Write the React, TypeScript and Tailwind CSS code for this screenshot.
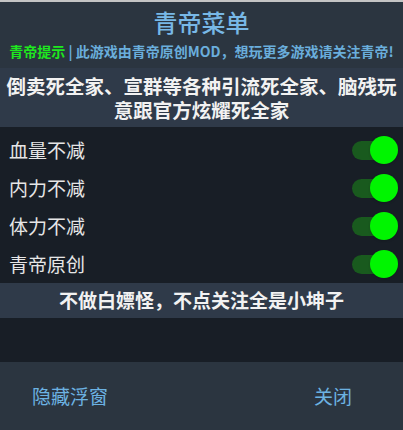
import { useState } from 'react'

const font = { fontFamily: '"Noto Sans CJK SC", "Noto Sans", sans-serif' }

const items = ['血量不减', '内力不减', '体力不减', '青帝原创']

function Toggle({ on, onClick }: { on: boolean; onClick: () => void }) {
  return (
    <button type="button" onClick={onClick} className="relative h-[30px] w-[48px]">
      <span
        className={`absolute left-[1px] top-[6px] h-[19px] w-[40px] rounded-full ${
          on ? 'bg-[#195a1e]' : 'bg-[#3a3f46]'
        }`}
      />
      <span
        className={`absolute top-[1px] h-[28px] w-[28px] rounded-full shadow ${
          on ? 'left-[19px] bg-[#00f500]' : 'left-0 bg-[#bbbbbb]'
        }`}
      />
    </button>
  )
}

export default function App() {
  const [state, setState] = useState<boolean[]>([true, true, true, true])

  return (
    <div className="flex h-[430px] w-[403px] flex-col bg-[#181e26]" style={font}>
      <div className="h-[2px] bg-[#c4c4c4]" />
      <div className="flex h-[66px] flex-col items-center bg-[#2b3540]">
        <div className="mt-[5px] text-[24px] font-medium leading-[30px] text-[#78b8e6]">青帝菜单</div>
        <div className="mt-[4px] whitespace-nowrap text-[14px] font-bold leading-[20px]">
          <span className="text-[#1ee81e]">青帝提示</span>
          <span className="text-[#6aaedc]"> | 此游戏由青帝原创MOD，想玩更多游戏请关注青帝!</span>
        </div>
      </div>
      <div className="flex h-[59px] flex-col items-center justify-center bg-[#2f3a49] text-center text-[19.5px] font-bold leading-[24px] text-[#f2f2f2]">
        <div>倒卖死全家、宣群等各种引流死全家、脑残玩</div>
        <div>意跟官方炫耀死全家</div>
      </div>
      <div className="pt-[4px]">
        {items.map((name, i) => (
          <div key={name} className="flex h-[38px] items-center justify-between pl-[9px] pr-[4px]">
            <span className="text-[19px] leading-[24px] text-[#e6e6e6]">{name}</span>
            <Toggle
              on={state[i]}
              onClick={() => setState((s) => s.map((v, j) => (j === i ? !v : v)))}
            />
          </div>
        ))}
      </div>
      <div className="flex h-[35px] items-center justify-center bg-[#2f3a49] text-[19px] font-bold text-[#f2f2f2]">
        不做白嫖怪，不点关注全是小坤子
      </div>
      <div className="flex-1" />
      <div className="flex h-[68px] items-center justify-between bg-[#2b3540] pl-[32px] pr-[51px] text-[19px] text-[#6cb2e2]">
        <button type="button">隐藏浮窗</button>
        <button type="button">关闭</button>
      </div>
    </div>
  )
}
